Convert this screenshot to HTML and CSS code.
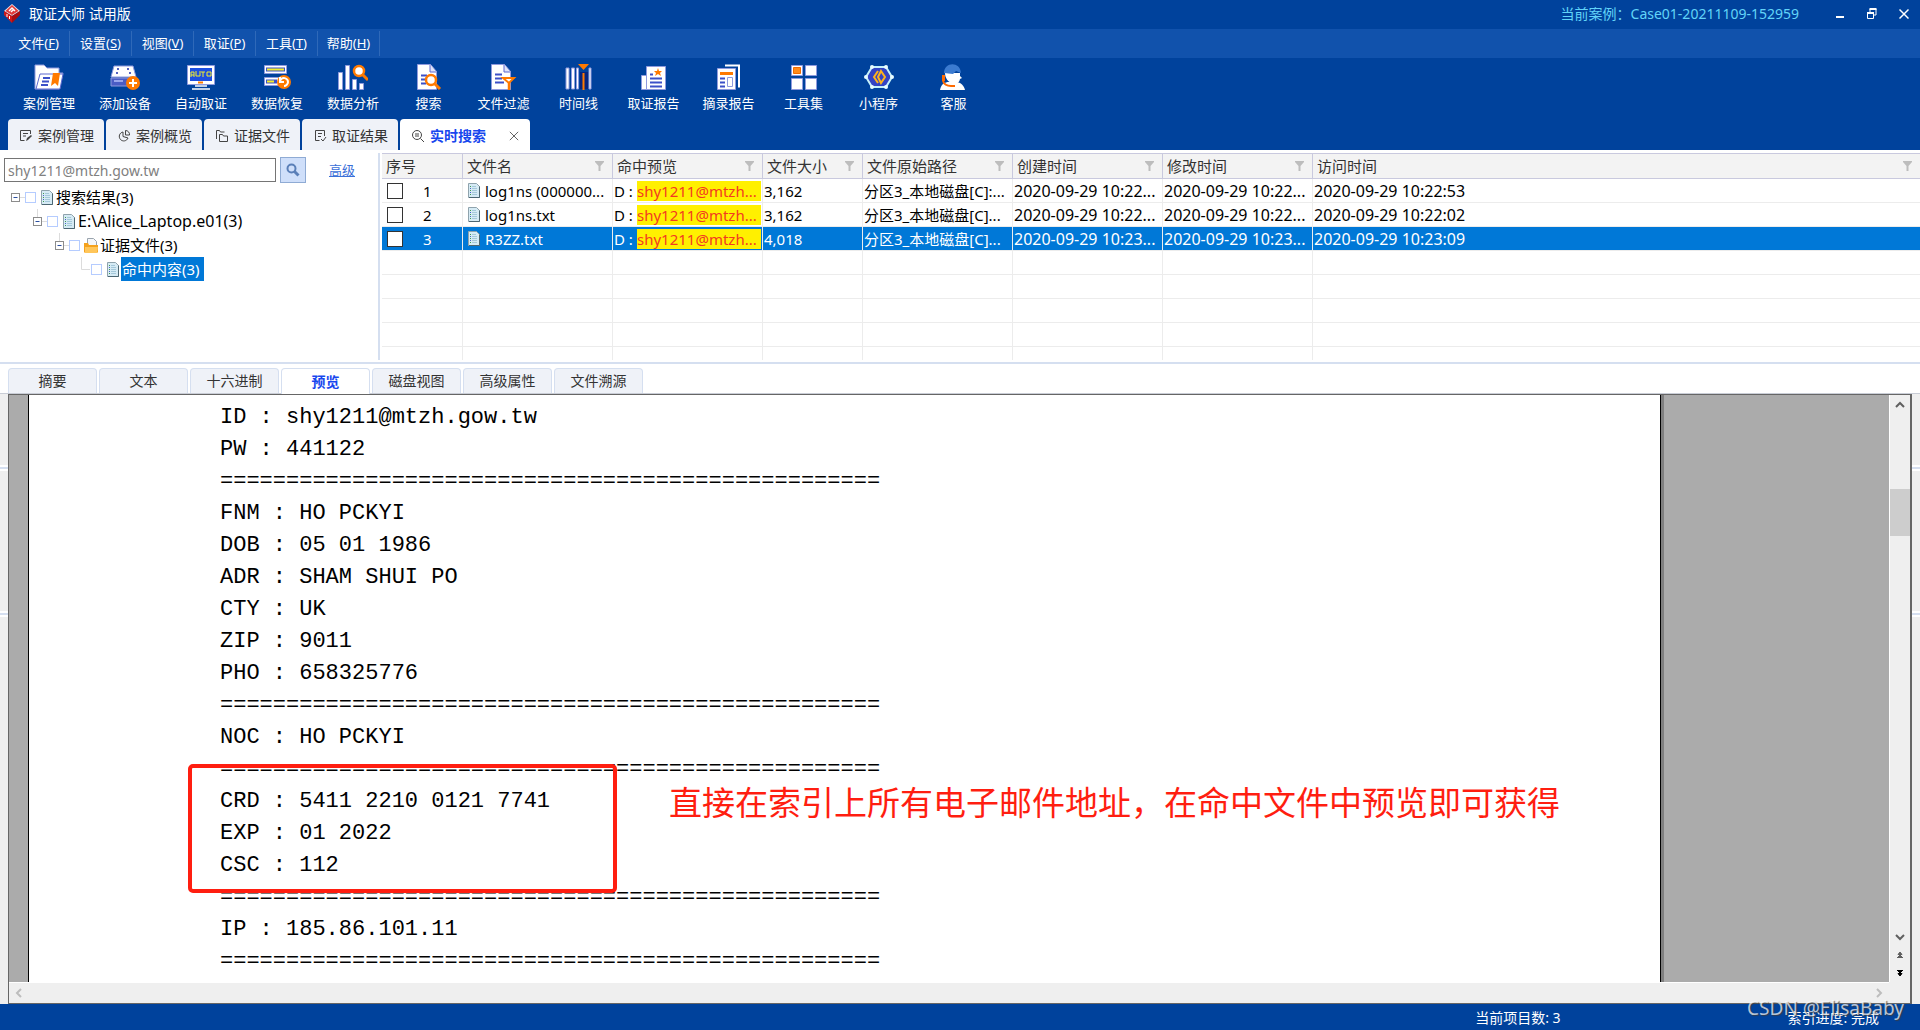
FILE: index.html
```html
<!DOCTYPE html>
<html lang="zh-CN">
<head>
<meta charset="utf-8">
<title>取证大师 试用版</title>
<link rel="stylesheet" href="styles.css">
</head>
<body>
<svg class="defs" aria-hidden="true">
  <defs>
    <symbol id="doc" viewBox="0 0 14 17">
      <path d="M1.500 1.500h8l3 3v11h-11z" fill="#d6ebf5" stroke="#8fa3ad"/>
      <path d="M12.500 4.500v11H2" fill="none" stroke="#4c6672"/>
      <path d="M5 4.500h4M5 6.500h5M5 8.500h5M5 10.500h5M5 12.500h5" stroke="#a5c8da"/>
      <path d="M3 4.500h1M3 8.500h1M3 12.500h1" stroke="#3f9a4f"/>
      <path d="M3 6.500h1M3 10.500h1" stroke="#4a62c8"/>
    </symbol>
    <symbol id="filter" viewBox="0 0 9 10">
      <path d="M0 0h9v1L5.500 5v5h-2V5L0 1z" fill="#bdbdbd"/>
    </symbol>
    <symbol id="branch" viewBox="0 0 14 24">
      <path d="M4.500 0v8M9 12.500h5" stroke="#dcdcdc" fill="none"/>
      <rect x=".5" y="8.500" width="8" height="8" fill="#fff" stroke="#8c8c8c"/>
      <path d="M2.500 12.500h4" stroke="#2b4fa0"/>
    </symbol>
  </defs>
</svg>

<header class="titlebar">
  <svg class="logo" width="16" height="19" viewBox="0 0 16 19"><path d="M8 0l8 7-8 5-8-5z" fill="#f6e4e4"/><path d="M8 1l6.500 6L8 11 1.500 7z" fill="#e03a3a"/><path d="M0 7l8 5v7l-8-8z" fill="#d01818"/><path d="M16 7l-8 5v7l8-8z" fill="#a80d12"/><path d="M5 7l3-3 3 3M7 8l2-2" stroke="#fff" stroke-width="1.500" fill="none"/><path d="M3 10v3M5.500 12v3" stroke="#fff" stroke-width="1"/></svg>
  <h1 class="app-name">取证大师 试用版</h1>
  <span class="case-name">当前案例：Case01-20211109-152959</span>
  <div class="window-buttons">
    <button aria-label="最小化"><svg width="10" height="12" viewBox="0 0 10 12"><path d="M1 9h8" stroke="#fff" stroke-width="2"/></svg></button>
    <button aria-label="还原"><svg width="10" height="12" viewBox="0 0 10 12"><path d="M3 4V1h6v6H7" fill="none" stroke="#fff" stroke-width="1"/><path d="M2.500 1h7" stroke="#fff" stroke-width="2"/><path d="M.5 5.500h6v5h-6z" fill="none" stroke="#fff"/><path d="M0 5h7" stroke="#fff" stroke-width="2"/></svg></button>
    <button aria-label="关闭"><svg width="10" height="12" viewBox="0 0 10 12"><path d="M.5 1.500l9 9M9.500 1.500l-9 9" stroke="#fff" stroke-width="1.500"/></svg></button>
  </div>
</header>

<nav class="menubar">
  <button>文件(<u>F</u>)</button>
  <button>设置(<u>S</u>)</button>
  <button>视图(<u>V</u>)</button>
  <button>取证(<u>P</u>)</button>
  <button>工具(<u>T</u>)</button>
  <button>帮助(<u>H</u>)</button>
</nav>

<div class="toolbar">
  <button class="wide"><svg viewBox="0 0 30 26"><path d="M1 1h9l3 3h12v5h4l-4 16H1z" fill="#fff" stroke="#8f9ade"/><path d="M6 10h23l-3 15H2z" fill="#fff" stroke="#5c69cf"/><path d="M9 14h7M8 17.500h7M7 21h7" stroke="#3c50c8" stroke-width="2"/><path d="M19 9h7l-2 13-3-3-4 3z" fill="#ff7a00"/></svg>案例管理</button>
  <button class="wide"><svg viewBox="0 0 30 26"><path d="M4 2h19l3 11H1z" fill="#fff" stroke="#8f9ade"/><path d="M7 5h2M17 5h2M6 9h2M19 9h2" stroke="#5360c0" stroke-width="2"/><path d="M1 14h24v8H1z" fill="#4b5cc4" stroke="#8f9ade"/><path d="M4 17h9" stroke="#9aa6ec" stroke-width="2"/><circle cx="23" cy="19" r="7" fill="#ff7a00"/><path d="M23 15v8M19 19h8" stroke="#fff" stroke-width="2"/></svg>添加设备</button>
  <button class="wide"><svg viewBox="0 0 30 26"><path d="M1.500 1.500h27v19h-27z" fill="#fff" stroke="#8f9ade"/><path d="M4 4h22v13H4z" fill="#1d4fe0"/><path d="M5 13V8h3v5M5 11h3M10 7v5h4V7M15 8h4M17 8v5M21 8h4v4h-4z" stroke="#f4ef2c" fill="none"/><path d="M12 18.500h5" stroke="#ff7a00" stroke-width="2"/><path d="M9 22h12M6 25h18" stroke="#fff" stroke-width="1.500"/></svg>自动取证</button>
  <button class="wide"><svg viewBox="0 0 30 26"><path d="M2.500 1.500h22v8h-22zM2.500 13.500h22v8h-22z" fill="#fff" stroke="#8f9ade"/><path d="M4 3.500h19v4H4zM4 15.500h11v4H4z" fill="#3c50c8"/><path d="M5 5.500h17M5 17.500h7" stroke="#f4ef2c" stroke-width="2"/><circle cx="22" cy="18" r="7" fill="#ff7a00"/><path d="M18 17c2-5 8-3 8 1 0 2-2 4-4 4M18 13v5h4" stroke="#fff" stroke-width="2" fill="none"/></svg>数据恢复</button>
  <button class="wide"><svg viewBox="0 0 30 26"><path d="M.5 8.500h4v17h-4zM7.500 1.500h4v24h-4zM14.500 15.500h4v10h-4zM21.500 19.500h4v6h-4z" fill="#fff" stroke="#8f9ade"/><circle cx="21" cy="7" r="5" fill="#fff" stroke="#ff7a00" stroke-width="2.500"/><path d="M25 11l5 5" stroke="#ff7a00" stroke-width="3"/></svg>数据分析</button>
  <button><svg viewBox="0 0 30 26"><path d="M3.500.5h13l6 7v18h-19z" fill="#fff" stroke="#8f9ade"/><path d="M16 1v7h6" fill="#dfe3fa" stroke="#5c69cf"/><path d="M7 11.500h6M7 15.500h4M7 19.500h5" stroke="#3c50c8" stroke-width="2"/><circle cx="17" cy="16" r="5" fill="#fff" stroke="#ff7a00" stroke-width="2.500"/><path d="M21 20l5 5" stroke="#ff7a00" stroke-width="3"/></svg>搜索</button>
  <button><svg viewBox="0 0 30 26"><path d="M2.500.5h13l6 7v18h-19z" fill="#fff" stroke="#8f9ade"/><path d="M15 1v7h6" fill="#dfe3fa" stroke="#5c69cf"/><path d="M6 10.500h7M6 14.500h7M6 18.500h9" stroke="#3c50c8" stroke-width="2"/><path d="M14 14h11l-5 5z" fill="#fff" stroke="#ff7a00" stroke-width="2"/><path d="M20 18v8" stroke="#ff7a00" stroke-width="2.500"/></svg>文件过滤</button>
  <button><svg viewBox="0 0 30 26"><path d="M2 4h3v21H2zM7.500 4h3v21h-3zM12.500 4h2v21h-2zM25 4h2v21h-2z" fill="#fff" stroke="#8f9ade"/><path d="M16 8h8v17h-8z" fill="#08247d"/><path d="M14 0h11l-5.500 6z" fill="#ff7a00"/><path d="M19.500 9v17" stroke="#ff7a00" stroke-width="2"/></svg>时间线</button>
  <button><svg viewBox="0 0 30 26"><path d="M2.500 11.500h7v14h-7z" fill="#fff" stroke="#8f9ade"/><path d="M7.500 2.500h19v23h-19z" fill="#fff" stroke="#8f9ade"/><path d="M19 4l1 3h3l-2 2 1 3-3-2-3 2 1-3-2-2h3z" fill="#ff7a00"/><path d="M11 10.500h3M11 14.500h12M11 18.500h12M11 22.500h12" stroke="#3c50c8" stroke-width="2"/></svg>取证报告</button>
  <button><svg viewBox="0 0 30 26"><path d="M11 1.500h14v22" fill="none" stroke="#fff" stroke-width="2"/><path d="M3.500 4.500h18v21h-18z" fill="#fff" stroke="#8f9ade"/><path d="M6 9.500h13" stroke="#ff7a00" stroke-width="3"/><path d="M6 14.500h5M6 18.500h5M6 22.500h5" stroke="#3c50c8" stroke-width="2"/><path d="M13.500 13.500h5v9h-5z" fill="#fff" stroke="#8f9ade"/></svg>摘录报告</button>
  <button><svg viewBox="0 0 30 26"><path d="M2.500 1.500h11v10h-11zM16.500 1.500h11v10h-11zM2.500 14.500h11v11h-11zM16.500 14.500h11v11h-11z" fill="#fff" stroke="#8f9ade"/><path d="M4.500 3.500h7v6h-7z" fill="#ff8a1a" stroke="#f06a00"/></svg>工具集</button>
  <button><svg viewBox="0 0 30 26"><path d="M8 3h14l6 10-6 10H8L2 13z" fill="#3343c4" stroke="#c5f2fb" stroke-width="2"/><g fill="#e9fdff"><circle cx="8" cy="3" r="2"/><circle cx="22" cy="3" r="2"/><circle cx="28" cy="13" r="2"/><circle cx="22" cy="23" r="2"/><circle cx="8" cy="23" r="2"/><circle cx="2" cy="13" r="2"/></g><path d="M14 7l-4 6 4 6M17 7l4 6-4 6-3-6z" stroke="#ffb21a" stroke-width="2" fill="none"/></svg>小程序</button>
  <button><svg viewBox="0 0 30 26"><path d="M1 26c1-6 5-8 9-8h7c5 0 8 4 9 8z" fill="#fff"/><path d="M6 9h15v3l2 2-2 1c-1 5-5 5-8 4-4-1-7-5-7-10z" fill="#fff"/><path d="M5 9c0-11 16-12 17 0l-5-2-3 3z" fill="#3b7bd0"/><path d="M3 11h3v6H3z" fill="#ff6a00"/><path d="M4 17c1 3 4 5 8 5h4" stroke="#ff6a00" stroke-width="2" fill="none"/></svg>客服</button>
</div>

<div class="main-tabs" role="tablist">
  <button class="tab" role="tab"><svg viewBox="0 0 12 12"><path d="M10.500 4V.5h-10v10h4M3 3.500h5M3 6h3" /><path d="M6 11l1-3 4-3 1 1-4 4z" fill="#444" stroke="none"/></svg>案例管理</button>
  <button class="tab" role="tab"><svg viewBox="0 0 12 12"><path d="M5 2a4.500 4.500 0 1 0 5 6L5 6.500z"/><path d="M7.500.5a4 4 0 0 1 4 4.500h-4z"/></svg>案例概览</button>
  <button class="tab" role="tab"><svg viewBox="0 0 12 12"><path d="M.5 9V.5h3l1 1.500h4"/><path d="M3.500 4.500h3l1 1.500h4v5.500h-8z"/></svg>证据文件</button>
  <button class="tab" role="tab"><svg viewBox="0 0 12 12"><path d="M10.500 6V.5h-9v10h4M4 3.500h4M4 6.500h3M7 9l2 2 3-4"/></svg>取证结果</button>
  <button class="tab active" role="tab" aria-selected="true"><svg viewBox="0 0 12 12"><circle cx="5" cy="5" r="4.500"/><path d="M8.500 8.500L12 12M3 4h4M3 6h4"/></svg>实时搜索<svg class="close" viewBox="0 0 12 12"><path d="M1 1l10 10M11 1L1 11"/></svg></button>
</div>

<main class="workspace">
  <section class="results">
    <aside class="search-pane">
      <form class="search-form">
        <input type="text" aria-label="搜索关键字" value="shy1211@mtzh.gow.tw">
        <button type="button" aria-label="搜索"><svg width="14" height="14" viewBox="0 0 14 14"><circle cx="5.500" cy="5.500" r="4" fill="none" stroke="#5a7fb8" stroke-width="2"/><path d="M8.500 8.500l4 4" stroke="#5a7fb8" stroke-width="3"/></svg></button>
        <a href="#">高级</a>
      </form>
      <ul class="tree">
        <li><svg class="branch" viewBox="0 0 14 24"><path d="M9 12.500h5" stroke="#dcdcdc"/><rect x=".5" y="8.500" width="8" height="8" fill="#fff" stroke="#8c8c8c"/><path d="M2.500 12.500h4" stroke="#2b4fa0"/></svg><label><input type="checkbox"><svg class="doc"><use href="#doc"/></svg><span>搜索结果(3)</span></label>
          <ul>
            <li><svg class="branch"><use href="#branch"/></svg><label><input type="checkbox"><svg class="doc"><use href="#doc"/></svg><span class="latin">E:\Alice_Laptop.e01(3)</span></label>
              <ul>
                <li><svg class="branch"><use href="#branch"/></svg><label><input type="checkbox"><svg class="doc" viewBox="0 0 14 17"><path d="M3.500 1.500h6l3 3v5h-9z" fill="#f4f6f8" stroke="#9aa4ae"/><path d="M0 6h4l1 2h9v7l-1 1H1l-1-1z" fill="#f5a21c"/><path d="M1 10h13l-1 6H1z" fill="#ffc65a"/></svg><span>证据文件(3)</span></label>
                  <ul>
                    <li><svg class="branch" viewBox="0 0 14 24"><path d="M4.500 0v12.500H13" fill="none" stroke="#dcdcdc"/></svg><label><input type="checkbox"><svg class="doc"><use href="#doc"/></svg><span class="selected">命中内容(3)</span></label></li>
                  </ul>
                </li>
              </ul>
            </li>
          </ul>
        </li>
      </ul>
    </aside>
    <div class="table-pane">
      <table>
        <colgroup><col class="c-no"><col class="c-std"><col class="c-std"><col class="c-size"><col class="c-std"><col class="c-std"><col class="c-std"><col></colgroup>
        <thead>
          <tr>
            <th>序号</th>
            <th><div>文件名<svg><use href="#filter"/></svg></div></th>
            <th><div>命中预览<svg><use href="#filter"/></svg></div></th>
            <th><div>文件大小<svg><use href="#filter"/></svg></div></th>
            <th><div>文件原始路径<svg><use href="#filter"/></svg></div></th>
            <th><div>创建时间<svg><use href="#filter"/></svg></div></th>
            <th><div>修改时间<svg><use href="#filter"/></svg></div></th>
            <th><div>访问时间<svg><use href="#filter"/></svg></div></th>
          </tr>
        </thead>
        <tbody>
          <tr>
            <td><label class="pick"><input type="checkbox"><span>1</span></label></td>
            <td><div class="file"><svg class="doc"><use href="#doc"/></svg><span>log1ns (000000...</span></div></td>
            <td><div class="hit"><span>D :</span><mark>shy1211@mtzh...</mark></div></td>
            <td>3,162</td><td>分区3_本地磁盘[C]:...</td><td class="time">2020-09-29 10:22...</td><td class="time">2020-09-29 10:22...</td><td class="time">2020-09-29 10:22:53</td>
          </tr>
          <tr>
            <td><label class="pick"><input type="checkbox"><span>2</span></label></td>
            <td><div class="file"><svg class="doc"><use href="#doc"/></svg><span>log1ns.txt</span></div></td>
            <td><div class="hit"><span>D :</span><mark>shy1211@mtzh...</mark></div></td>
            <td>3,162</td><td>分区3_本地磁盘[C]...</td><td class="time">2020-09-29 10:22...</td><td class="time">2020-09-29 10:22...</td><td class="time">2020-09-29 10:22:02</td>
          </tr>
          <tr class="selected">
            <td><label class="pick"><input type="checkbox"><span>3</span></label></td>
            <td><div class="file"><svg class="doc"><use href="#doc"/></svg><span>R3ZZ.txt</span></div></td>
            <td><div class="hit"><span>D :</span><mark>shy1211@mtzh...</mark></div></td>
            <td>4,018</td><td>分区3_本地磁盘[C]...</td><td class="time">2020-09-29 10:23...</td><td class="time">2020-09-29 10:23...</td><td class="time">2020-09-29 10:23:09</td>
          </tr>
          <tr><td></td><td></td><td></td><td></td><td></td><td></td><td></td><td></td></tr>
          <tr><td></td><td></td><td></td><td></td><td></td><td></td><td></td><td></td></tr>
          <tr><td></td><td></td><td></td><td></td><td></td><td></td><td></td><td></td></tr>
          <tr><td></td><td></td><td></td><td></td><td></td><td></td><td></td><td></td></tr>
          <tr class="last"><td></td><td></td><td></td><td></td><td></td><td></td><td></td><td></td></tr>
        </tbody>
      </table>
    </div>
  </section>

  <div class="view-tabs" role="tablist">
    <button role="tab">摘要</button>
    <button role="tab">文本</button>
    <button role="tab">十六进制</button>
    <button role="tab" class="active" aria-selected="true">预览</button>
    <button role="tab">磁盘视图</button>
    <button role="tab">高级属性</button>
    <button role="tab">文件溯源</button>
  </div>

  <section class="preview">
    <div class="edge"><i></i><i></i></div>
    <div class="viewer">
      <div class="canvas">
        <div class="page">
<pre>ID : shy1211@mtzh.gow.tw
PW : 441122
==================================================
FNM : HO PCKYI
DOB : 05 01 1986
ADR : SHAM SHUI PO
CTY : UK
ZIP : 9011
PHO : 658325776
==================================================
NOC : HO PCKYI
==================================================
CRD : 5411 2210 0121 7741
EXP : 01 2022
CSC : 112
==================================================
IP : 185.86.101.11
==================================================</pre>
          <div class="callout-box"></div>
          <p class="callout-text">直接在索引上所有电子邮件地址，在命中文件中预览即可获得</p>
        </div>
      </div>
      <div class="vscroll">
        <button aria-label="向上"><svg width="10" height="8" viewBox="0 0 10 8"><path d="M1 6l4-4 4 4" fill="none" stroke="#606060" stroke-width="2"/></svg></button>
        <div class="track"><div class="thumb"></div></div>
        <button aria-label="向下"><svg width="10" height="8" viewBox="0 0 10 8"><path d="M1 2l4 4 4-4" fill="none" stroke="#606060" stroke-width="2"/></svg></button>
        <button aria-label="上一页"><svg width="6" height="6" viewBox="0 0 6 6"><path d="M3 0l2 2.500H1zM3 2v1M0 5.500h6M3 3l2 2H1z" fill="#606060" stroke="#606060"/></svg></button>
        <button aria-label="下一页"><svg width="6" height="6" viewBox="0 0 6 6"><path d="M0 .5h6M1 1h4L3 3zM1 3.500h4L3 6z" fill="#000" stroke="#000"/></svg></button>
      </div>
      <div class="hscroll">
        <button aria-label="向左"><svg width="8" height="10" viewBox="0 0 8 10"><path d="M6 1L2 5l4 4" fill="none" stroke="#bdbdbd" stroke-width="2"/></svg></button>
        <button aria-label="向右"><svg width="8" height="10" viewBox="0 0 8 10"><path d="M2 1l4 4-4 4" fill="none" stroke="#bdbdbd" stroke-width="2"/></svg></button>
      </div>
    </div>
    <div class="edge"><i></i><i></i></div>
  </section>
</main>

<footer class="statusbar">
  <span class="count">当前项目数: 3</span>
  <span class="progress">索引进度: 完成</span>
  <span class="watermark">CSDN @ElisaBaby</span>
</footer>
</body>
</html>
```
FILE: styles.css
```css
* { box-sizing: border-box; }

body {
  margin: 0;
  min-height: 100vh;
  display: flex;
  flex-direction: column;
  background: #fff;
  color: #000;
  font: 14px/20px "Noto Sans", "Noto Sans CJK SC", sans-serif;
}

button {
  margin: 0;
  padding: 0;
  border: 0;
  background: none;
  color: inherit;
  font: inherit;
}

svg { display: block; flex: none; }
.defs { position: absolute; width: 0; height: 0; }
.doc { width: 14px; height: 17px; }

/* Title bar */
.titlebar {
  display: flex;
  align-items: center;
  height: 29px;
  padding: 0 11px 2px 4px;
  background: #00429c;
  color: #fff;
}
.app-name { margin: 0 0 0 9px; font-size: 14px; font-weight: 400; }
.case-name { margin-left: auto; color: #62d4f8; }
.window-buttons { display: flex; gap: 22px; margin-left: 36px; }
.window-buttons button { height: 16px; }

/* Menu */
.menubar {
  display: flex;
  height: 29px;
  padding: 2px 0 2px 8px;
  background: #1152ac;
  color: #fff;
}
.menubar button {
  width: 62px;
  padding-bottom: 2px;
  border-right: 1px solid #2f69b9;
  font-size: 13px;
}

/* Toolbar */
.toolbar {
  display: flex;
  height: 61px;
  padding: 6px 12px 0 11px;
  background: #00429c;
  color: #fff;
  font-size: 13px;
}
.toolbar button {
  display: flex;
  flex-direction: column;
  align-items: center;
  gap: 3px;
  width: 75px;
}
.toolbar .wide { width: 76px; }
.toolbar svg { width: 30px; height: 26px; }

/* Main tabs */
.main-tabs {
  display: flex;
  gap: 2px;
  height: 31px;
  padding-left: 8px;
  background: #00429c;
}
.tab {
  display: flex;
  align-items: center;
  gap: 6px;
  width: 96px;
  padding: 3px 0 0 12px;
  border-radius: 4px 4px 0 0;
  background: #eff2f8;
  color: #333;
  white-space: nowrap;
}
.tab svg { width: 12px; height: 12px; overflow: visible; fill: none; stroke: #444; }
.tab.active { width: 130px; background: #fff; color: #1747ee; font-weight: 700; }
.tab .close { width: 10px; height: 10px; margin-left: 17px; }

.workspace { flex: 1; display: flex; flex-direction: column; }

/* Search pane and tree */
.results {
  display: flex;
  padding: 3px 0 2px;
  border-bottom: 2px solid #d5dff0;
}
.search-pane { width: 380px; padding-left: 4px; border-right: 2px solid #d5dff0; }
.search-form { display: flex; align-items: center; height: 34px; }
.search-form input {
  width: 272px;
  height: 24px;
  padding: 0 3px;
  border: 1px solid #757575;
  color: #808080;
  font: inherit;
}
.search-form button {
  display: grid;
  place-items: center;
  width: 26px;
  height: 26px;
  margin: 0 23px 0 4px;
  border: 1px solid #8fabd4;
  background: #cfdffa;
}
.search-form a { color: #3a6fd8; font-size: 13px; }

.tree, .tree ul { margin: 0; padding: 0; list-style: none; }
.tree { padding-left: 7px; font-size: 15px; line-height: 24px; margin-top: -2px; }
.tree ul { padding-left: 22px; }
.tree .branch { float: left; width: 14px; height: 24px; }
.tree label { display: flex; align-items: center; height: 24px; white-space: nowrap; }
.tree input {
  appearance: none;
  width: 11px;
  height: 11px;
  margin: 0 4px 0 0;
  border: 1px solid #b5ccff;
  background: #fff;
}
.tree span { padding: 0 4px 0 1px; margin-left: 1px; }
.tree .latin { font-size: 16px; }
.tree .selected { background: #0078d7; color: #fff; }

/* Result table */
.table-pane { flex: 1; min-width: 0; padding-left: 2px; }
table {
  width: 100%;
  table-layout: fixed;
  border-collapse: separate;
  border-spacing: 0;
  font-size: 15px;
  line-height: 20px;
}
.c-no { width: 81px; }
.c-std { width: 150px; }
.c-size { width: 100px; }
th {
  height: 26px;
  padding: 0 4px;
  border: solid #c9c9de;
  border-width: 1px 1px 1px 0;
  background: #f3f3f3;
  color: #333;
  font-weight: 400;
  text-align: left;
}
th div { display: flex; align-items: center; justify-content: space-between; }
th svg { width: 9px; height: 10px; margin-right: 4px; }
td {
  height: 24px;
  padding: 0 1px;
  overflow: hidden;
  border: solid #ececec;
  border-width: 0 1px 1px 0;
  white-space: nowrap;
}
th:last-child, td:last-child { border-right: 0; }
.time { font-size: 16px; }
.pick { display: flex; align-items: center; padding-left: 4px; }
.pick input {
  appearance: none;
  width: 16px;
  height: 16px;
  margin: 0 20px 0 0;
  border: 1px solid #333;
  background: #fff;
}
.file { display: flex; align-items: center; gap: 4px; padding-left: 3px; }
.hit { display: flex; justify-content: space-between; }
mark { width: 124px; background: #fff000; color: #f33b20; }
tr.selected td { background: #0078d7; color: #fff; }
tr.selected mark { color: #f33b20; }
.last td { height: 13px; border-bottom: 0; }

/* Viewer tabs */
.view-tabs {
  display: flex;
  gap: 2px;
  height: 30px;
  padding: 4px 8px 0;
  border-bottom: 1px solid #c9cdd6;
}
.view-tabs button {
  width: 89px;
  border: 1px solid #d5dff0;
  border-bottom: 0;
  border-radius: 4px 4px 0 0;
  background: #eff2f8;
  color: #333;
}
.view-tabs .active {
  margin-bottom: -1px;
  background: #fff;
  color: #1747ee;
  font-weight: 700;
}

/* Preview */
.preview { flex: 1; display: flex; }
.edge {
  display: flex;
  flex-direction: column;
  gap: 140px;
  width: 8px;
  padding-top: 71px;
  background: #efefef;
}
.edge i { height: 6px; border: solid #fff; border-width: 2px 0; background: #d5dff0; }
.viewer {
  flex: 1;
  display: grid;
  grid-template-columns: 1fr 21px;
  grid-template-rows: 1fr 21px;
  border: 1px solid #666;
  border-right-width: 2px;
  background: #efefef;
}
.canvas { display: flex; padding: 0 228px 0 19px; background: #ababab; }
.page {
  position: relative;
  flex: 1;
  padding: 7px 0 4px 191px;
  border-left: 1px solid #000;
  border-right: 1px solid #000;
  background: #fff;
  box-shadow: 3px 0 #7f7f7f;
}
pre { margin: 0; font: 22px/32px "Liberation Mono", monospace; }
.callout-box {
  position: absolute;
  left: 159px;
  top: 369px;
  width: 429px;
  height: 129px;
  border: 4px solid #ff1e10;
  border-radius: 5px;
}
.callout-text {
  position: absolute;
  left: 640px;
  top: 388px;
  margin: 0;
  color: #ff1e10;
  font-size: 33px;
  line-height: 40px;
  white-space: nowrap;
}
.vscroll {
  display: flex;
  flex-direction: column;
  align-items: stretch;
  border-left: 1px solid #fff;
}
.vscroll button { display: grid; place-items: center; height: 18px; }
.vscroll button:first-child { height: 20px; }
.track { flex: 1; padding-top: 74px; }
.thumb { height: 47px; background: #cdcdcd; }
.hscroll {
  display: flex;
  align-items: center;
  justify-content: space-between;
  padding: 0 6px;
  border-top: 1px solid #fff;
}

/* Status bar */
.statusbar {
  position: relative;
  display: flex;
  height: 26px;
  padding: 4px 41px 0 0;
  background: #00429c;
  color: #fff;
}
.count { margin-left: auto; }
.progress { margin-left: 227px; }
.watermark {
  position: absolute;
  right: 16px;
  bottom: 8px;
  color: rgba(255, 255, 255, 0.7);
  font-size: 19px;
  line-height: 28px;
  text-shadow: 1px 1px 1px rgba(60, 60, 60, 0.8);
}
```
